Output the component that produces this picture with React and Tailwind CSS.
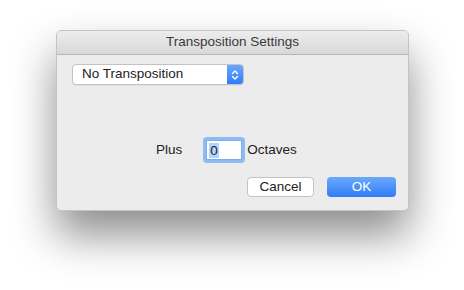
import React from 'react';

export default function App() {
  return (
    <div className="w-[464px] h-[290px] bg-white pt-[30px] pl-[56px]" style={{ fontFamily: '"Liberation Sans", Arial, sans-serif' }}>
      <div className="w-[353px] h-[181px] rounded-[5px] bg-[#ececec] border border-[#c4c4c4] shadow-[0_24px_44px_rgba(0,0,0,0.45)] overflow-hidden flex flex-col">
        <div className="h-[24px] bg-gradient-to-b from-[#ededed] to-[#d8d8d8] border-b border-[#b5b5b5] flex items-center justify-center text-[13.5px] text-[#3a3a3a]">
          Transposition Settings
        </div>

        <div className="pl-[15px] pt-[9px]">
          <div className="w-[172px] h-[21px] flex rounded-[4px] border border-[#c3c3c3] bg-white shadow-[0_1px_0_rgba(0,0,0,0.05)] overflow-hidden">
            <div className="flex-1 flex items-center pl-[9px] text-[13.5px] text-[#222]">No Transposition</div>
            <div className="w-[16px] bg-gradient-to-b from-[#6aa8fb] to-[#2f7cf6] flex items-center justify-center">
              <svg width="8" height="12" viewBox="0 0 8 12" fill="none" stroke="white" strokeWidth="1.4" strokeLinecap="round" strokeLinejoin="round">
                <path d="M1.5 4.5 L4 2 L6.5 4.5" />
                <path d="M1.5 7.5 L4 10 L6.5 7.5" />
              </svg>
            </div>
          </div>
        </div>

        <div className="flex items-center pl-[99px] mt-[52px] text-[13.5px] text-[#222]">
          <span>Plus</span>
          <div className="ml-[21px] w-[42px] h-[26px] rounded-[4px] bg-[#8cbcf3] p-[3px]">
            <div className="w-full h-full bg-white border border-[#7faee6] flex items-center pl-[2px]">
              <span className="bg-[#b3d4fc] px-[1px] leading-[15px]">0</span>
            </div>
          </div>
          <span className="ml-[2px]">Octaves</span>
        </div>

        <div className="flex justify-end gap-[13px] pr-[12px] mt-[14px] text-[13.5px]">
          <button className="w-[67px] h-[20px] rounded-[4px] bg-white border border-[#c3c3c3] text-[#222] flex items-center justify-center">Cancel</button>
          <button className="w-[69px] h-[20px] rounded-[4px] bg-gradient-to-b from-[#6aa8fb] to-[#2f7cf6] text-white flex items-center justify-center">OK</button>
        </div>
      </div>
    </div>
  );
}
